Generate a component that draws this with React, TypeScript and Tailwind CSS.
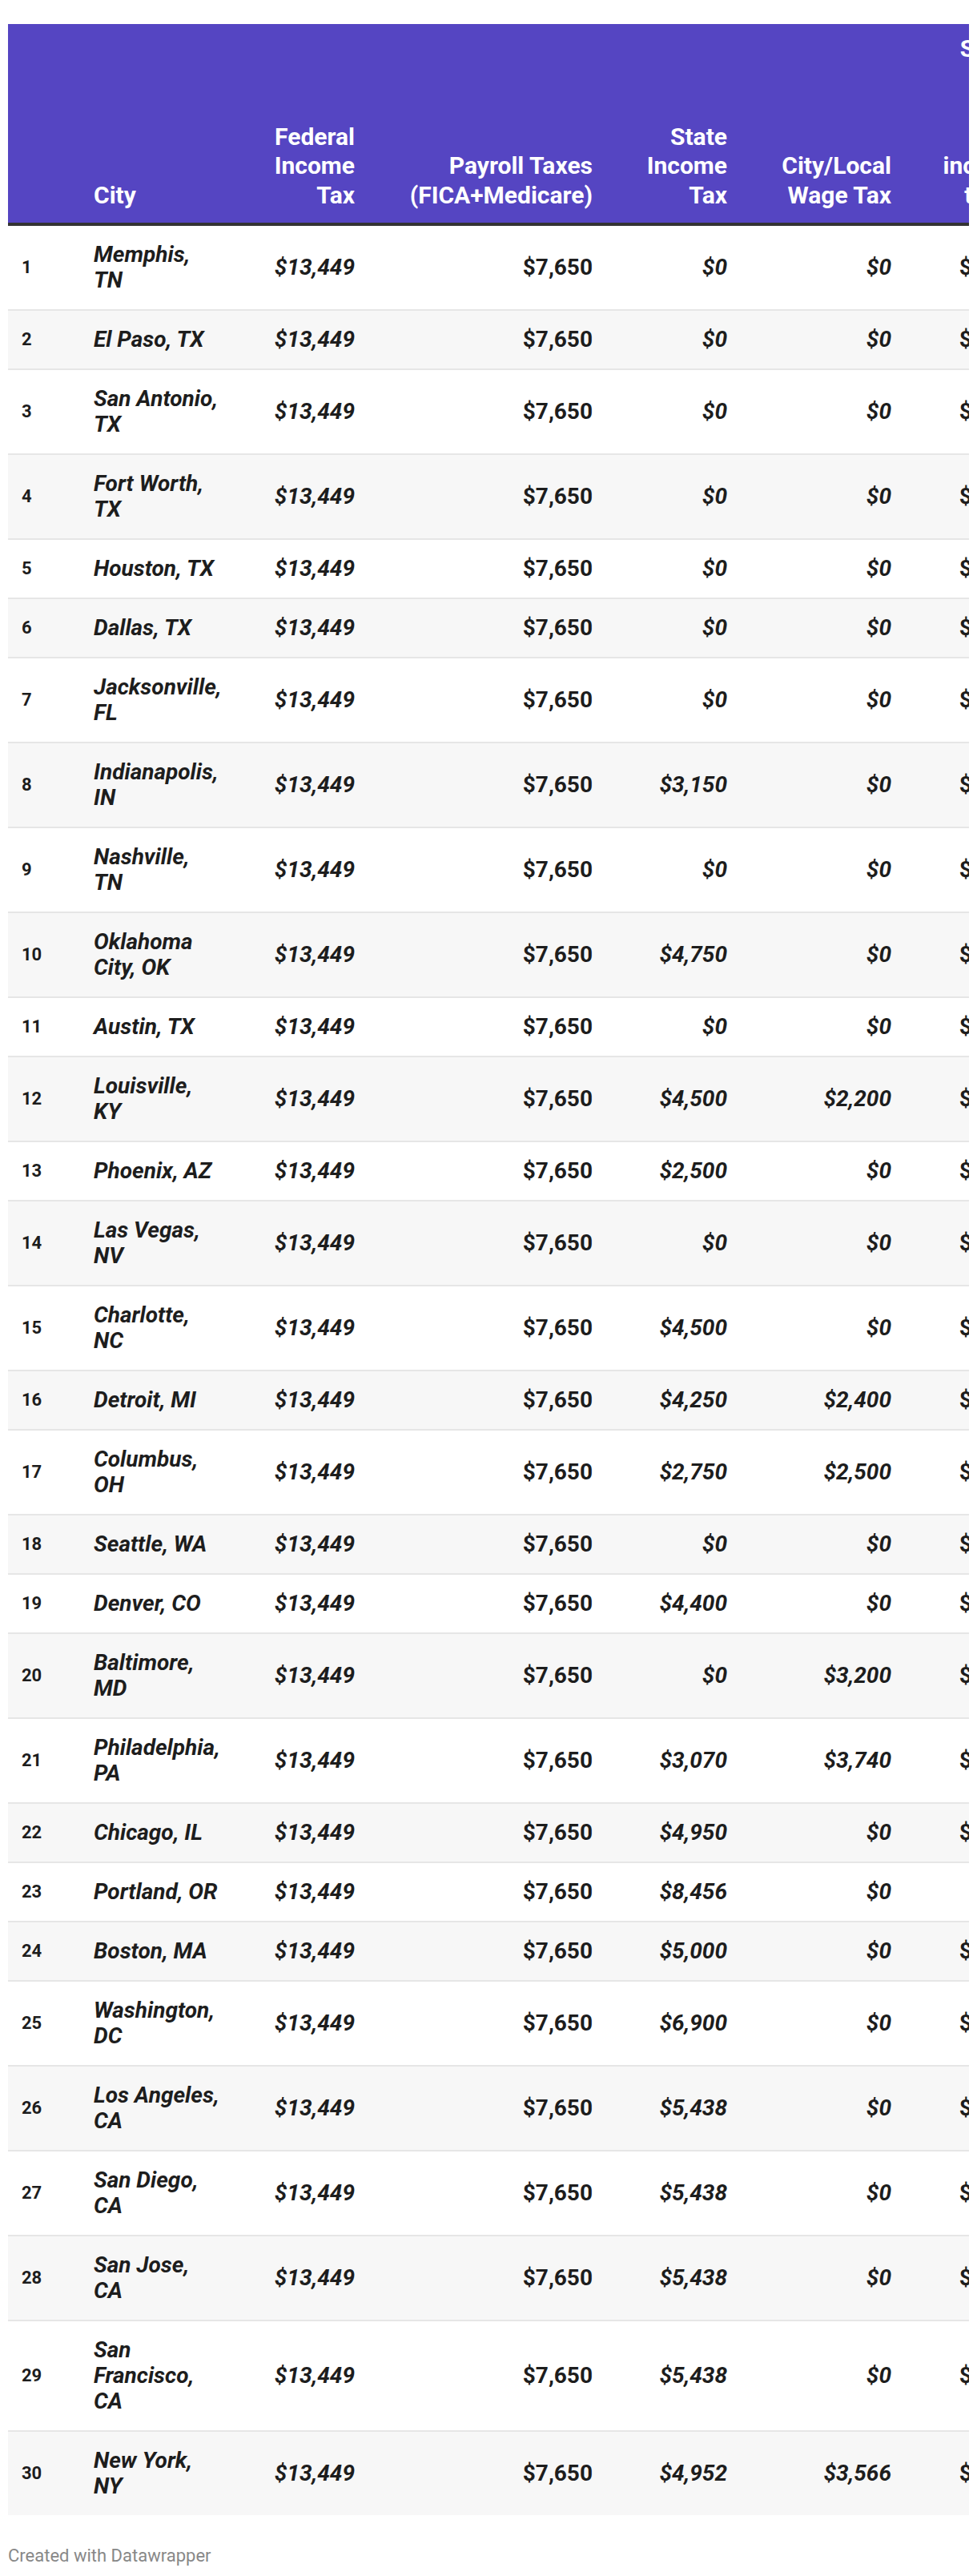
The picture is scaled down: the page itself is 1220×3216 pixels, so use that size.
import React from 'react'

type Row = [string, number, number]

const rows: Row[] = [
  ['Memphis, TN', 0, 0],
  ['El Paso, TX', 0, 0],
  ['San Antonio, TX', 0, 0],
  ['Fort Worth, TX', 0, 0],
  ['Houston, TX', 0, 0],
  ['Dallas, TX', 0, 0],
  ['Jacksonville, FL', 0, 0],
  ['Indianapolis, IN', 3150, 0],
  ['Nashville, TN', 0, 0],
  ['Oklahoma City, OK', 4750, 0],
  ['Austin, TX', 0, 0],
  ['Louisville, KY', 4500, 2200],
  ['Phoenix, AZ', 2500, 0],
  ['Las Vegas, NV', 0, 0],
  ['Charlotte, NC', 4500, 0],
  ['Detroit, MI', 4250, 2400],
  ['Columbus, OH', 2750, 2500],
  ['Seattle, WA', 0, 0],
  ['Denver, CO', 4400, 0],
  ['Baltimore, MD', 0, 3200],
  ['Philadelphia, PA', 3070, 3740],
  ['Chicago, IL', 4950, 0],
  ['Portland, OR', 8456, 0],
  ['Boston, MA', 5000, 0],
  ['Washington, DC', 6900, 0],
  ['Los Angeles, CA', 5438, 0],
  ['San Diego, CA', 5438, 0],
  ['San Jose, CA', 5438, 0],
  ['San Francisco, CA', 5438, 0],
  ['New York, NY', 4952, 3566],
]

const fmt = (n: number) => '$' + n.toLocaleString('en-US')

export default function App() {
  return (
    <div
      className="bg-white px-[10px] pt-[30px] pb-[16px] text-[#1d1d1d]"
      style={{ fontFamily: 'Roboto, "Liberation Sans", sans-serif' }}
    >
      <div className="w-[1200px] overflow-hidden">
        <table className="w-[1300px] table-fixed border-collapse">
          <colgroup>
            <col className="w-[90px]" />
            <col className="w-[190px]" />
            <col className="w-[170px]" />
            <col className="w-[297px]" />
            <col className="w-[168px]" />
            <col className="w-[205px]" />
            <col className="w-[180px]" />
          </colgroup>
          <thead>
            <tr className="border-b-4 border-[#333333] bg-[#5545c2] text-[30px] font-bold leading-[36.5px] text-white">
              <th className="pt-[13px] pb-[16px]" />
              <th className="pl-[17px] pt-[13px] pb-[16px] text-left align-bottom">City</th>
              <th className="pr-[17px] pl-[40px] pt-[13px] pb-[16px] text-right align-bottom">Federal Income Tax</th>
              <th className="pr-[17px] pl-[17px] pt-[13px] pb-[16px] text-right align-bottom">Payroll Taxes (FICA+Medicare)</th>
              <th className="pr-[17px] pl-[17px] pt-[13px] pb-[16px] text-right align-bottom">State Income Tax</th>
              <th className="pr-[17px] pl-[17px] pt-[13px] pb-[16px] text-right align-bottom">City/Local Wage Tax</th>
              <th className="pr-[33px] pt-[13px] pb-[16px] text-right align-bottom">
                Share
                <br />
                of
                <br />
                pay
                <br />
                to
                <br />
                income
                <br />
                taxes
              </th>
            </tr>
          </thead>
          <tbody>
            {rows.map(([city, state, local], i) => {
              const total = 13449 + 7650 + state + local
              return (
                <tr
                  key={city}
                  className={
                    (i % 2 === 1 ? 'bg-[#f7f7f7] ' : 'bg-white ') +
                    (i < rows.length - 1 ? 'border-b-2 border-[#e6e6e6]' : '')
                  }
                >
                  <td className="pl-[17px] py-[20px] align-middle text-[22px] font-bold leading-[32px]">{i + 1}</td>
                  <td className="pl-[17px] pr-[14px] py-[20px] align-middle text-[28px] font-bold italic leading-[32px]">
                    {city}
                  </td>
                  <td className="pr-[17px] py-[20px] text-right align-middle text-[28px] font-bold italic leading-[32px]">
                    $13,449
                  </td>
                  <td className="pr-[17px] py-[20px] text-right align-middle text-[28px] font-bold leading-[32px]">
                    $7,650
                  </td>
                  <td className="pr-[17px] py-[20px] text-right align-middle text-[28px] font-bold italic leading-[32px]">
                    {fmt(state)}
                  </td>
                  <td className="pr-[17px] py-[20px] text-right align-middle text-[28px] font-bold italic leading-[32px]">
                    {fmt(local)}
                  </td>
                  <td className="pr-[9px] py-[20px] text-right align-middle text-[28px] font-bold leading-[32px]">
                    {city === 'Portland, OR' ? '' : fmt(total)}
                  </td>
                </tr>
              )
            })}
          </tbody>
        </table>
      </div>
      <p className="mt-[38px] text-[22px] leading-[26px] text-[#888888]">Created with Datawrapper</p>
    </div>
  )
}
